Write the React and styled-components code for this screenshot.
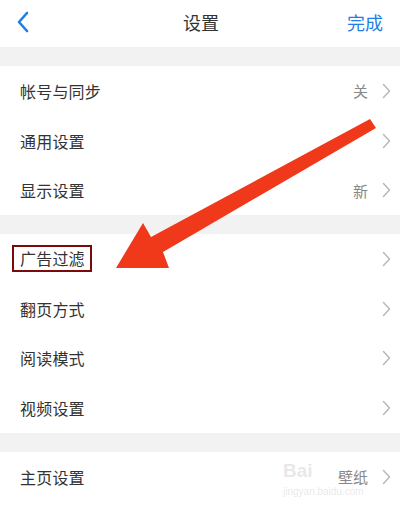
import React from 'react'
import styled, { createGlobalStyle } from 'styled-components'

const GlobalStyle = createGlobalStyle`
  html, body {
    margin: 0;
    padding: 0;
    background: #fff;
  }
  body {
    font-family: "Noto Sans CJK SC", "Noto Sans", sans-serif;
  }
`

const Page = styled.div`
  position: relative;
  width: 400px;
  height: 515px;
  overflow: hidden;
  display: flex;
  flex-direction: column;
  background: #f2f2f2;
`

const NavBar = styled.div`
  height: 47px;
  box-sizing: border-box;
  padding-bottom: 3px;
  display: grid;
  grid-template-columns: 60px 1fr 60px;
  align-items: center;
  background: #fff;
`

const BackButton = styled.div`
  display: flex;
  align-items: center;
  padding-left: 16px;
  height: 100%;
`

const NavTitle = styled.div`
  text-align: center;
  font-size: 18px;
  color: #333;
  padding-left: 2px;
`

const DoneButton = styled.div`
  text-align: right;
  padding-right: 17px;
  font-size: 18px;
  color: #1f7de3;
`

const Group = styled.div`
  margin-top: 19px;
  background: #fff;
  ${p => p.$fill && 'flex: 1;'}
`

const RowWrap = styled.div`
  height: 49.7px;
  display: flex;
  align-items: center;
  padding: 0 9px 0 20px;
`

const Label = styled.span`
  flex: 1;
  font-size: 16px;
  color: #333;
  letter-spacing: 0.2px;
  ${p => p.$boxed && `
    margin-left: -8px;
    flex: 0 0 auto;
    padding: 0 5px 0 6px;
    height: 23px;
    line-height: 23px;
    border: 2px solid #7b0a0a;
  `}
`

const Spacer = styled.div`
  flex: 1;
`

const Value = styled.span`
  font-size: 15px;
  color: #888;
  margin-right: 14px;
`

const Chevron = styled.svg`
  width: 9px;
  height: 16px;
  flex: 0 0 auto;
`

const Overlay = styled.svg`
  position: absolute;
  left: 0;
  top: 0;
  pointer-events: none;
`

const Watermark = styled.div`
  position: absolute;
  left: 283px;
  top: 461px;
  color: rgba(175, 175, 175, 0.3);
  font-family: "Liberation Sans", sans-serif;
  line-height: 1;
`

const MarkBig = styled.div`
  width: 52px;
  font-size: 19px;
  font-weight: bold;
  white-space: nowrap;
`

const MarkSmall = styled.div`
  font-size: 10px;
  margin-top: 7px;
`

function Row({ label, value, boxed }) {
  return (
    <RowWrap>
      <Label $boxed={boxed}>{label}</Label>
      {boxed && <Spacer />}
      {value && <Value>{value}</Value>}
      <Chevron viewBox="0 0 9 16">
        <path d="M1.5 1.5 L7.5 8 L1.5 14.5" fill="none" stroke="#b8b8b8" strokeWidth="1.5" strokeLinecap="round" strokeLinejoin="round" />
      </Chevron>
    </RowWrap>
  )
}

export default function App() {
  return (
    <Page>
      <GlobalStyle />
      <NavBar>
        <BackButton>
          <svg width="14" height="22" viewBox="0 0 14 22">
            <path d="M11 2 L3 11 L11 20" fill="none" stroke="#1f7de3" strokeWidth="2.6" strokeLinecap="round" strokeLinejoin="round" />
          </svg>
        </BackButton>
        <NavTitle>设置</NavTitle>
        <DoneButton>完成</DoneButton>
      </NavBar>
      <Group>
        <Row label="帐号与同步" value="关" />
        <Row label="通用设置" />
        <Row label="显示设置" value="新" />
      </Group>
      <Group>
        <Row label="广告过滤" boxed />
        <Row label="翻页方式" />
        <Row label="阅读模式" />
        <Row label="视频设置" />
      </Group>
      <Group $fill>
        <Row label="主页设置" value="壁纸" />
      </Group>
      <Watermark>
        <MarkBig>Bai</MarkBig>
        <MarkSmall>jingyan.baidu.com</MarkSmall>
      </Watermark>
      <Overlay width="400" height="515" viewBox="0 0 400 515">
        <polygon
          points="370,119 376,128 163,252 169,268 116,268 143,223 151,237"
          fill="#f0391a"
        />
      </Overlay>
    </Page>
  )
}
